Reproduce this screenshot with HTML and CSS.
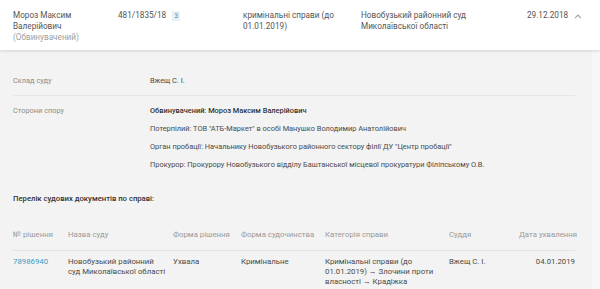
FILE: index.html
```html
<!DOCTYPE html>
<html lang="uk">
<head>
  <meta charset="UTF-8" />
  <meta name="viewport" content="width=device-width, initial-scale=1.0" />
  <title>Справа 481/1835/18</title>
  <link rel="stylesheet" href="styles.css">
</head>
<body>
  <!-- Case summary row -->
  <div class="case-row">
    <div class="case-col col-name">
      Мороз Максим<br>Валерійович<br>
      <span class="muted">(Обвинувачений)</span>
    </div>
    <div class="case-col col-number">
      481/1835/18 <span class="badge">3</span>
    </div>
    <div class="case-col col-category">кримінальні справи (до 01.01.2019)</div>
    <div class="case-col col-court">Новобузький районний суд<br>Миколаївської області</div>
    <div class="case-col col-date">29.12.2018</div>
    <div class="case-col col-toggle">
      <svg width="8" height="5" viewBox="0 0 8 5"><path d="M1 4.2 L4 1.2 L7 4.2" fill="none" stroke="#9aa3a8" stroke-width="1.2"/></svg>
    </div>
  </div>

  <!-- Expanded case details -->
  <div class="details">
    <div class="info-row">
      <div class="info-label">Склад суду</div>
      <div class="info-value">Вжещ С. І.</div>
    </div>
    <div class="info-row">
      <div class="info-label">Сторони спору</div>
      <div class="info-value parties">
        <div class="strong">Обвинувачений: Мороз Максим Валерійович</div>
        <div>Потерпілий: ТОВ "АТБ-Маркет" в особі Манушко Володимир Анатолійович</div>
        <div>Орган пробації: Начальнику Новобузького районного сектору філії ДУ "Центр пробації"</div>
        <div>Прокурор: Прокурору Новобузького відділу Баштанської місцевої прокуратури Філіпському О.В.</div>
      </div>
    </div>

    <h3 class="docs-title">Перелік судових документів по справі:</h3>

    <table class="docs">
      <thead>
        <tr>
          <th class="c-num">№ рішення</th>
          <th class="c-court">Назва суду</th>
          <th class="c-form">Форма рішення</th>
          <th class="c-proc">Форма судочинства</th>
          <th class="c-cat">Категорія справи</th>
          <th class="c-judge">Суддя</th>
          <th class="c-date">Дата ухвалення</th>
        </tr>
      </thead>
      <tbody>
        <tr>
          <td><a href="#" class="doc-link">78986940</a></td>
          <td>Новобузький районний<br>суд Миколаївської області</td>
          <td>Ухвала</td>
          <td>Кримінальне</td>
          <td>Кримінальні справи (до 01.01.2019) → Злочини проти власності → Крадіжка</td>
          <td>Вжещ С. І.</td>
          <td class="c-date">04.01.2019</td>
        </tr>
      </tbody>
    </table>
  </div>
</body>
</html>
```

FILE: styles.css
```css
*, *::before, *::after {
  box-sizing: border-box;
}
body {
  margin: 0;
  font-family: Roboto, 'Liberation Sans', sans-serif;
  background-color: #f7f7f7;
  color: #4a4a4a;
  overflow: hidden;
}
.case-row {
  display: flex;
  height: 50px;
  padding: 10px 0 0 13px;
  background-color: #fff;
  font-size: 8.2px;
  line-height: 11px;
  color: #555;
  box-shadow: 0 1px 3px rgba(0, 0, 0, 0.14);
  position: relative;
  z-index: 1;
}
.col-name { width: 105px; }
.col-number { width: 125px; }
.col-category { width: 118px; }
.col-court { width: 166px; }
.col-date { width: 47px; }
.col-toggle { padding-top: 1px; }
.muted {
  color: #a0a0a0;
}
.badge {
  display: inline-block;
  margin-left: 4px;
  padding: 0 2px;
  background-color: #e6f2f8;
  color: #3d8fbf;
  font-size: 7px;
  line-height: 10px;
}
.details {
  margin-right: 8px;
  padding: 16px 17px 0 13px;
  min-height: 240px;
  background-color: #f3f3f3;
  font-size: 7.4px;
  line-height: 12px;
}
.info-row {
  display: flex;
  padding: 9px 0;
  border-bottom: 1px solid #e6e6e6;
}
.info-row:first-child {
  padding-bottom: 8px;
}
.info-row:last-of-type {
  border-bottom: none;
}
.info-label {
  width: 137px;
  color: #8c8c8c;
}
.info-value {
  color: #4a4a4a;
}
.parties {
  display: flex;
  flex-direction: column;
  gap: 6px;
}
.strong {
  font-weight: 500;
  color: #333;
}
.docs-title {
  margin: 13px 0 0;
  font-size: 7.7px;
  line-height: 12px;
  font-weight: 500;
  color: #333;
}
.docs {
  width: 100%;
  margin-top: 25px;
  border-collapse: collapse;
  table-layout: fixed;
  font-size: 7.8px;
  line-height: 10px;
}
.docs th {
  padding: 0 0 10px;
  text-align: left;
  font-weight: 400;
  white-space: nowrap;
  color: #9a9a9a;
  border-bottom: 1px solid #e3e3e3;
}
.docs td {
  padding: 6px 4px 0 0;
  vertical-align: top;
  color: #4a4a4a;
}
.docs .c-date {
  text-align: right;
  padding-right: 0;
}
.c-num { width: 55px; }
.c-court { width: 105px; }
.c-form { width: 68px; }
.c-proc { width: 84px; }
.c-cat { width: 124px; }
.c-judge { width: 70px; }
.doc-link {
  color: #3b9bc6;
  text-decoration: none;
}
```
